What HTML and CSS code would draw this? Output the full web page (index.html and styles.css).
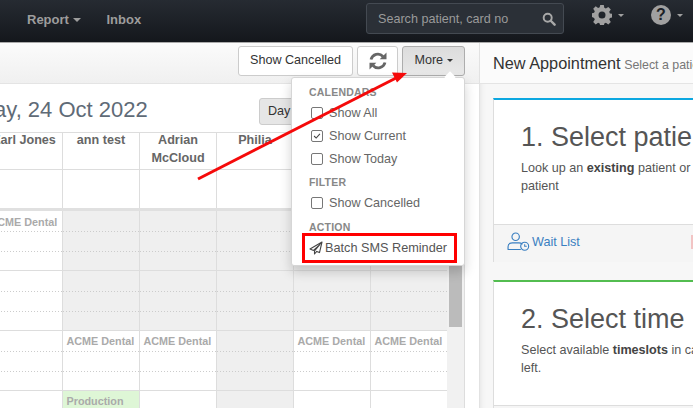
FILE: index.html
```html
<!DOCTYPE html>
<html lang="en">
<head>
<meta charset="utf-8">
<title>Appointments</title>
<link rel="stylesheet" href="styles.css">
</head>
<body>
<header class="navbar">
  <nav class="nav-links">
    <a class="nav-link">Report <i class="caret"></i></a>
    <a class="nav-link">Inbox</a>
  </nav>
  <div class="nav-tools">
    <div class="search">
      <span>Search patient, card no</span>
      <svg class="search-icon" viewBox="0 0 16 16"><circle cx="6.5" cy="6.5" r="4.6" fill="none" stroke="currentColor" stroke-width="2.2"/><path d="M10 10l4.4 4.4" stroke="currentColor" stroke-width="2.8" stroke-linecap="round"/></svg>
    </div>
    <div class="nav-icon">
      <svg class="gear" viewBox="0 0 20 20"><path fill="currentColor" fill-rule="evenodd" d="M8.2 0h3.6l.5 2.8 1.6.7 2.4-1.6 2.5 2.5-1.6 2.4.7 1.6 2.100.4v3.600l-2.100.5-.7 1.600 1.600 2.400-2.500 2.500-2.400-1.600-1.600.7-.5 2.500H8.200l-.5-2.500-1.600-.7-2.400 1.600-2.500-2.500 1.600-2.400-.7-1.600L0 11.900V8.300l2.100-.5.7-1.600-1.600-2.400 2.500-2.500 2.400 1.600 1.600-.7zM10 6.500a3.500 3.500 0 1 0 0 7 3.500 3.500 0 0 0 0-7z"/></svg>
      <i class="caret"></i>
    </div>
    <div class="nav-icon help">
      <span class="help-badge">?</span>
      <i class="caret"></i>
    </div>
  </div>
</header>
<main class="layout">
  <section class="calendar-pane">
    <div class="toolbar">
      <button class="btn">Show Cancelled</button>
      <button class="btn btn-icon">
        <svg viewBox="0 0 20 20" class="refresh"><path fill="none" stroke="currentColor" stroke-width="2.8" d="M3 8.500A7 7 0 0 1 15 5.500"/><path fill="currentColor" d="M18.500 1.500v6.800h-6.800z"/><path fill="none" stroke="currentColor" stroke-width="2.800" d="M17 11.500A7 7 0 0 1 5 14.500"/><path fill="currentColor" d="M1.500 18.500v-6.800h6.800z"/></svg>
      </button>
      <button class="btn btn-more">More <i class="caret dark"></i></button>
    </div>
    <div class="calendar">
      <div class="cal-head">
        <h2 class="cal-title">Monday, 24 Oct 2022</h2>
        <div class="view-btn">Day</div>
      </div>
      <div class="cal-scroll">
        <div class="cal-clip">
          <div class="cal-grid">
            <div class="names">
              <div class="name">Earl Jones</div>
              <div class="name">ann test</div>
              <div class="name wrap">Adrian McCloud</div>
              <div class="name">Philia</div>
              <div class="name"></div>
              <div class="name"></div>
            </div>
            <div class="allday">
              <div></div><div></div><div></div><div></div><div></div><div></div>
            </div>
            <div class="block block-first">
              <div class="col"><span class="tag">ACME Dental</span></div>
              <div class="col off"></div><div class="col off"></div><div class="col off"></div><div class="col off"></div><div class="col off"></div>
            </div>
            <div class="block">
              <div class="col"></div>
              <div class="col off"></div><div class="col off"></div><div class="col off"></div><div class="col off"></div><div class="col off"></div>
            </div>
            <div class="block">
              <div class="col"></div>
              <div class="col"><span class="tag">ACME Dental</span></div>
              <div class="col"><span class="tag">ACME Dental</span></div>
              <div class="col off"></div>
              <div class="col"><span class="tag">ACME Dental</span></div>
              <div class="col"><span class="tag">ACME Dental</span></div>
            </div>
            <div class="block">
              <div class="col"></div>
              <div class="col prod"><span class="tag">Production</span></div>
              <div class="col"></div>
              <div class="col off"></div>
              <div class="col"></div>
              <div class="col"></div>
            </div>
          </div>
        </div>
        <div class="scrollbar"><div class="thumb"></div></div>
      </div>
    </div>
  </section>
  <aside class="side-pane">
    <div class="side-head"><span class="side-title">New Appointment</span> <small>Select a patient</small></div>
    <div class="side-body">
      <article class="card card-blue">
        <div class="card-main">
          <h1>1. Select patient</h1>
          <p>Look up an <b>existing</b> patient or create a new patient</p>
        </div>
        <div class="card-foot">
          <a class="wait">
            <svg viewBox="0 0 24 20" class="wait-icon"><circle cx="9" cy="5" r="3.900" fill="none" stroke="currentColor" stroke-width="1.200"/><path d="M1 18v-2.500c0-2.500 2-4 4.500-4h7c1.500 0 2.500.4 3.300 1.100M1 18.400h13" fill="none" stroke="currentColor" stroke-width="1.200" stroke-linecap="round"/><circle cx="18.500" cy="15" r="4.200" fill="none" stroke="currentColor" stroke-width="1.200"/><path d="M18.500 12.800V15h2.200" fill="none" stroke="currentColor" stroke-width="1.100"/></svg>
            Wait List
          </a>
          <span class="pink-mark"></span>
        </div>
      </article>
      <article class="card card-green">
        <div class="card-main">
          <h1>2. Select time</h1>
          <p>Select available <b>timeslots</b> in calendar on the left.</p>
        </div>
        <div class="card-foot"></div>
      </article>
    </div>
  </aside>
</main>
<div class="menu">
  <div class="menu-label first">CALENDARS</div>
  <label class="menu-item"><i class="check"></i>Show All</label>
  <label class="menu-item"><i class="check on"><svg viewBox="0 0 12 12"><path d="M2.500 6l2.500 2.500 4.500-5" fill="none" stroke="currentColor" stroke-width="1.300"/></svg></i>Show Current</label>
  <label class="menu-item"><i class="check"></i>Show Today</label>
  <div class="menu-label">FILTER</div>
  <label class="menu-item"><i class="check"></i>Show Cancelled</label>
  <div class="menu-label">ACTION</div>
  <a class="menu-action">
    <svg viewBox="0 0 14 14" class="plane"><path d="M13 1L1 8l3.500 1.400L11 3.500 5.500 10v3l2.200-2.600 2.800 1.200z" fill="none" stroke="currentColor" stroke-width="1.100" stroke-linejoin="round"/></svg>
    Batch SMS Reminder
  </a>
</div>
<div class="highlight"></div>
<svg class="arrow" viewBox="0 0 693 408"><path d="M198 179L398 77" stroke="#f50a0a" stroke-width="3"/><path d="M407 73l-15-.500 5 10z" fill="#f50a0a"/></svg>
</body>
</html>
```
FILE: styles.css
```css
* { box-sizing: border-box; }
html, body { margin: 0; height: 100%; overflow: hidden; }
body { font-family: "Liberation Sans", Arial, sans-serif; font-size: 12.6px; color: #555; background: #fff; position: relative; }
button { font: inherit; }

.navbar { height: 43px; display: flex; justify-content: space-between; background: linear-gradient(#262b32, #14171c); border-bottom: 1px solid #aaa; color: #9d9d9d; }
.nav-links { display: flex; padding-left: 27px; gap: 26px; align-items: center; height: 38px; }
.nav-link { font-size: 13px; font-weight: 700; color: #9d9d9d; }
.caret { display: inline-block; width: 0; height: 0; border-top: 4px solid currentColor; border-left: 4px solid transparent; border-right: 4px solid transparent; vertical-align: middle; }
.caret.dark { color: #333; border-top-width: 3.500px; border-left-width: 3.500px; border-right-width: 3.500px; }
.nav-tools { display: flex; align-items: flex-start; }
.search { margin-top: 3px; width: 198px; height: 31px; background: #2b3037; border: 1px solid #444a52; border-radius: 3px; display: flex; align-items: center; justify-content: space-between; padding: 0 7px 0 11px; font-size: 12.6px; color: #9a9a9a; }
.search-icon { width: 14px; height: 14px; color: #a8a8a8; }
.nav-icon { display: flex; align-items: center; height: 30px; color: #a0a0a0; }
.nav-icon .caret { border-width: 3px; border-bottom-width: 0; margin-left: 6px; }
.gear { width: 20px; height: 20px; margin-left: 28px; }
.help { margin-left: 27px; padding-right: 10px; }
.help-badge { width: 20px; height: 20px; border-radius: 50%; background: #a0a0a0; color: #1b1f26; font-weight: 700; font-size: 16px; line-height: 20px; text-align: center; }

.layout { display: flex; height: 365px; }
.calendar-pane { width: 480px; flex: none; border-right: 1px solid #e2e2e2; display: flex; flex-direction: column; overflow: hidden; }
.toolbar { height: 41px; flex: none; display: flex; justify-content: flex-end; gap: 4px; padding: 3px 14px 0 0; background: linear-gradient(#fbfbfb, #f0f0f0); border-bottom: 1px solid #e4e4e4; }
.btn { height: 30px; background: #fff; border: 1px solid #ccc; border-radius: 3px; color: #333; font-size: 12.6px; padding: 0 11px 2px; }
.btn-icon { width: 41px; padding: 0; display: flex; align-items: center; justify-content: center; }
.refresh { width: 20px; height: 20px; color: #666; }
.btn-more { width: 63px; padding: 0 0 2px; background: linear-gradient(#dcdcdc, #e8e8e8); border-color: #adadad; }

.calendar { flex: 1; min-height: 0; display: flex; flex-direction: column; }
.cal-head { height: 48px; flex: none; display: flex; justify-content: space-between; align-items: flex-start; padding-top: 13px; }
.cal-title { margin: 0 0 0 -61px; font-size: 22px; font-weight: 400; line-height: 26px; color: #5f6b77; white-space: nowrap; }
.view-btn { margin: 1px 130px 0 0; width: 90px; height: 27px; background: #e6e6e6; border: 1px solid #ccc; border-radius: 3px; font-size: 12.6px; padding-left: 8px; line-height: 25px; color: #333; }
.cal-scroll { flex: 1; min-height: 0; display: flex; overflow: hidden; padding-right: 15px; }
.cal-clip { flex: none; width: 447px; overflow: hidden; }
.cal-grid { width: 462px; margin-left: -14px; border-top: 1px solid #ddd; }
.names, .allday, .block { display: grid; grid-template-columns: repeat(6, 77px); }
.names { height: 37px; border-bottom: 1px solid #ddd; }
.name { margin-top: -2px; border-right: 1px solid #ddd; padding: 0 2px; text-align: center; font-size: 12.6px; font-weight: 700; line-height: 18px; color: #666; white-space: nowrap; }
.name.wrap { white-space: normal; }
.allday { height: 41px; border-bottom: 3px solid #e0e0e0; }
.allday div { border-right: 1px solid #ddd; }
.block { height: 60px; border-bottom: 1px solid #ddd; }
.col { border-right: 1px solid #ddd; background-image: linear-gradient(to right, #ccc 1px, transparent 1px), linear-gradient(to right, #ccc 1px, transparent 1px); background-size: 3px 1px, 3px 1px; background-position: 0 20px, 0 40px; background-repeat: repeat-x; padding: 2px 3px 0 3.500px; overflow: hidden; line-height: 16px; }
.block-first .col { padding-top: 3px; }
.col.off { background-color: #efefef; }
.col.prod { background-color: #def6d6; }
.tag { font-size: 10.800px; font-weight: 700; color: #aaa; white-space: nowrap; }
.scrollbar { width: 18px; padding: 0 2px; margin-top: 38px; background: #f1f1f1; border-right: 1px solid #ddd; flex: none; }
.thumb { width: 13px; height: 157px; background: #bbb; }

.side-pane { flex: 1; min-width: 0; background: #f7f7f7; display: flex; flex-direction: column; overflow: hidden; box-shadow: inset 6px 0 6px -6px rgba(0,0,0,.1); }
.side-head { height: 41px; flex: none; padding: 11px 0 0 13px; border-bottom: 1px solid #e4e4e4; background: #fbfbfb; white-space: nowrap; }
.side-title { font-size: 16.300px; color: #333; }
.side-head small { font-size: 12.400px; color: #777; }
.side-body { padding: 14px 0 0 13px; }
.card { width: 320px; background: #fff; border: 1px solid #ddd; border-top-width: 2px; margin-bottom: 18px; }
.card-blue { border-top-color: #0ca7e0; height: 164px; }
.card-green { border-top-color: #53bd50; height: 164px; }
.card-main { height: 124px; padding: 21px 0 0 27px; }
.card-green .card-main { height: 123px; }
.card h1 { margin: 0 0 6px; font-size: 27px; font-weight: 400; line-height: 32px; color: #555; white-space: nowrap; }
.card p { margin: 0; font-size: 12.600px; line-height: 18px; color: #555; width: 262px; }
.card b { color: #444; }
.card-foot { height: 38px; background: #f5f5f5; border-top: 1px solid #ddd; display: flex; align-items: center; padding: 0 0 4px 13px; }
.wait { display: flex; align-items: center; gap: 2px; color: #3a7fc1; font-size: 12.600px; }
.wait-icon { width: 23px; height: 19px; }
.pink-mark { width: 2px; height: 14px; background: #f2c4c4; margin-left: 111px; }

.menu { position: absolute; left: 291px; top: 77px; width: 174px; height: 189px; background: #fff; border: 1px solid #d6d6d6; border-radius: 3px; box-shadow: 0 6px 12px rgba(0,0,0,.18); padding: 6.500px 0 0 17px; }
.menu::before { content: ""; position: absolute; top: -5px; right: 10px; width: 8px; height: 8px; background: #fff; transform: rotate(45deg); }
.menu-label { font-size: 10.500px; font-weight: 700; color: #888; line-height: 14px; margin: 5px 0 2.500px; letter-spacing: .2px; }
.menu-label.first { margin-top: 0; }
.menu-item { display: flex; align-items: center; height: 23px; font-size: 12.600px; color: #666; gap: 6px; }
.check { width: 12px; height: 12px; margin-left: 2px; border: 1px solid #777; border-radius: 2px; color: #444; display: block; flex: none; }
.check svg { display: block; width: 10px; height: 10px; }
.menu-action { display: flex; align-items: center; gap: 2px; height: 24px; margin: 2px 0 0 0; font-size: 12.700px; color: #555; }
.plane { width: 14px; height: 14px; color: #444; }
.highlight { position: absolute; left: 302px; top: 233px; width: 155px; height: 30px; border: 3px solid #f00; }
.arrow { position: absolute; left: 0; top: 0; width: 693px; height: 408px; pointer-events: none; }
```
